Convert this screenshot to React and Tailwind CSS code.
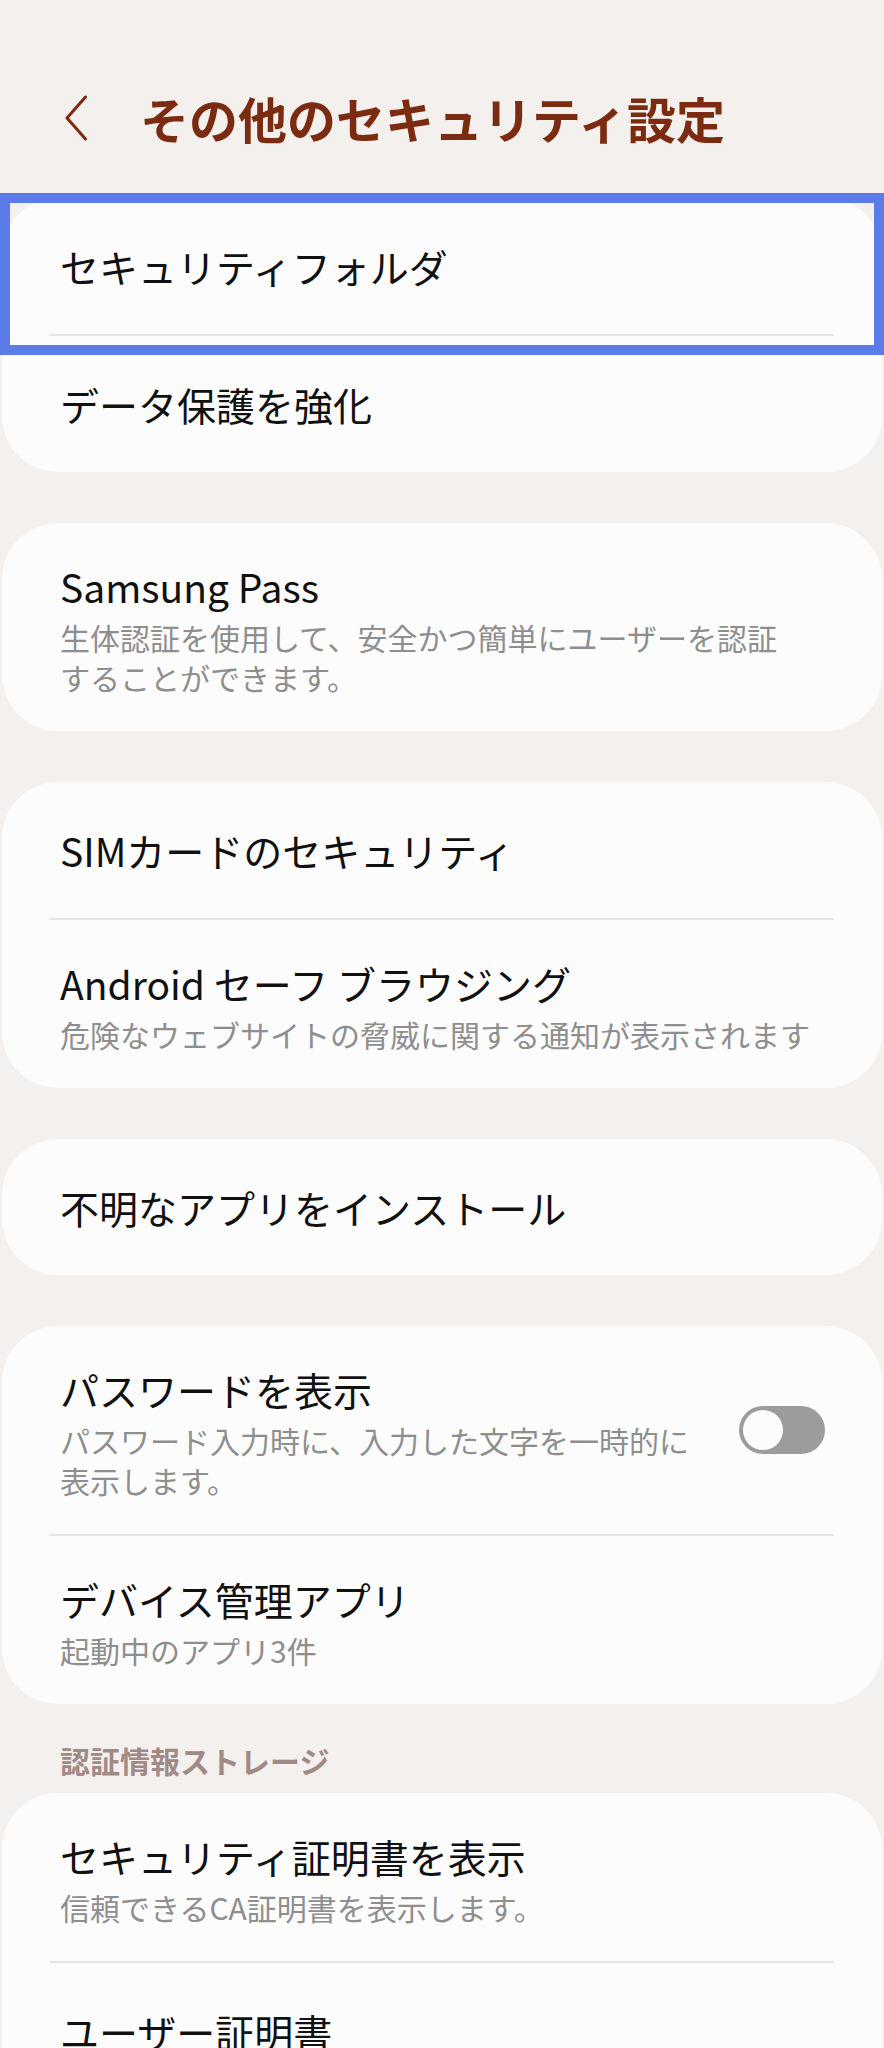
import React from "react";

function Divider() {
  return <div className="mx-[48px] h-[2px] bg-[#e4e4e4]" />;
}

function Toggle() {
  return (
    <div className="relative h-[48px] w-[86px] shrink-0 rounded-full bg-[#9c9c9c]">
      <div className="absolute left-[4px] top-[4px] h-[40px] w-[40px] rounded-full bg-[#fcfcfc]" />
    </div>
  );
}

function Row({ title, sub, toggle }) {
  return (
    <div className="flex min-h-[136px] items-center justify-between pl-[58px] pr-[57px] py-[34px]">
      <div className="flex flex-col">
        <div className="text-[39px] leading-[58px] text-[#111111]">{title}</div>
        {sub && (
          <div className="mt-[2px] text-[30px] leading-[40px] text-[#8e8e8e]">{sub}</div>
        )}
      </div>
      {toggle && <Toggle />}
    </div>
  );
}

function Card({ children, className = "" }) {
  return (
    <div className={"mx-[2px] overflow-hidden rounded-[56px] bg-[#fcfcfc] " + className}>
      {children}
    </div>
  );
}

export default function App() {
  return (
    <div className="relative h-[2048px] w-full overflow-hidden bg-[#f4f0ee] font-['Noto_Sans_CJK_JP',sans-serif]">
      <div className="flex h-[198px] items-start pt-[88px]">
        <div className="flex h-[60px] items-center">
          <svg className="ml-[64px]" width="24" height="46" viewBox="0 0 24 46" fill="none">
            <polyline
              points="21.5,2 3,23 21.5,44"
              stroke="#7b2c10"
              strokeWidth="3"
              strokeLinecap="round"
              strokeLinejoin="round"
            />
          </svg>
          <h1 className="ml-[52px] text-[49px] font-bold leading-[60px] text-[#7b2c10]">
            その他のセキュリティ設定
          </h1>
        </div>
      </div>

      <div className="flex flex-col gap-[51px]">
        <Card>
          <Row title="セキュリティフォルダ" />
          <Divider />
          <Row title="データ保護を強化" />
        </Card>

        <Card>
          <Row
            title="Samsung Pass"
            sub={
              <>
                生体認証を使用して、安全かつ簡単にユーザーを認証
                <br />
                することができます。
              </>
            }
          />
        </Card>

        <Card>
          <Row title="SIMカードのセキュリティ" />
          <Divider />
          <Row
            title="Android セーフ ブラウジング"
            sub="危険なウェブサイトの脅威に関する通知が表示されます"
          />
        </Card>

        <Card>
          <Row title="不明なアプリをインストール" />
        </Card>

        <Card>
          <Row
            title="パスワードを表示"
            sub={
              <>
                パスワード入力時に、入力した文字を一時的に
                <br />
                表示します。
              </>
            }
            toggle
          />
          <Divider />
          <Row title="デバイス管理アプリ" sub="起動中のアプリ3件" />
        </Card>
      </div>

      <div className="pl-[60px] pt-[36px] pb-[13px] text-[30px] font-bold leading-[40px] text-[#a08a86]">
        認証情報ストレージ
      </div>

      <Card className="min-h-[320px]">
        <Row title="セキュリティ証明書を表示" sub="信頼できるCA証明書を表示します。" />
        <Divider />
        <Row title="ユーザー証明書" />
      </Card>

      <div className="pointer-events-none absolute left-0 top-[193px] h-[162px] w-full border-[10px] border-[#5b7be8]" />
    </div>
  );
}
